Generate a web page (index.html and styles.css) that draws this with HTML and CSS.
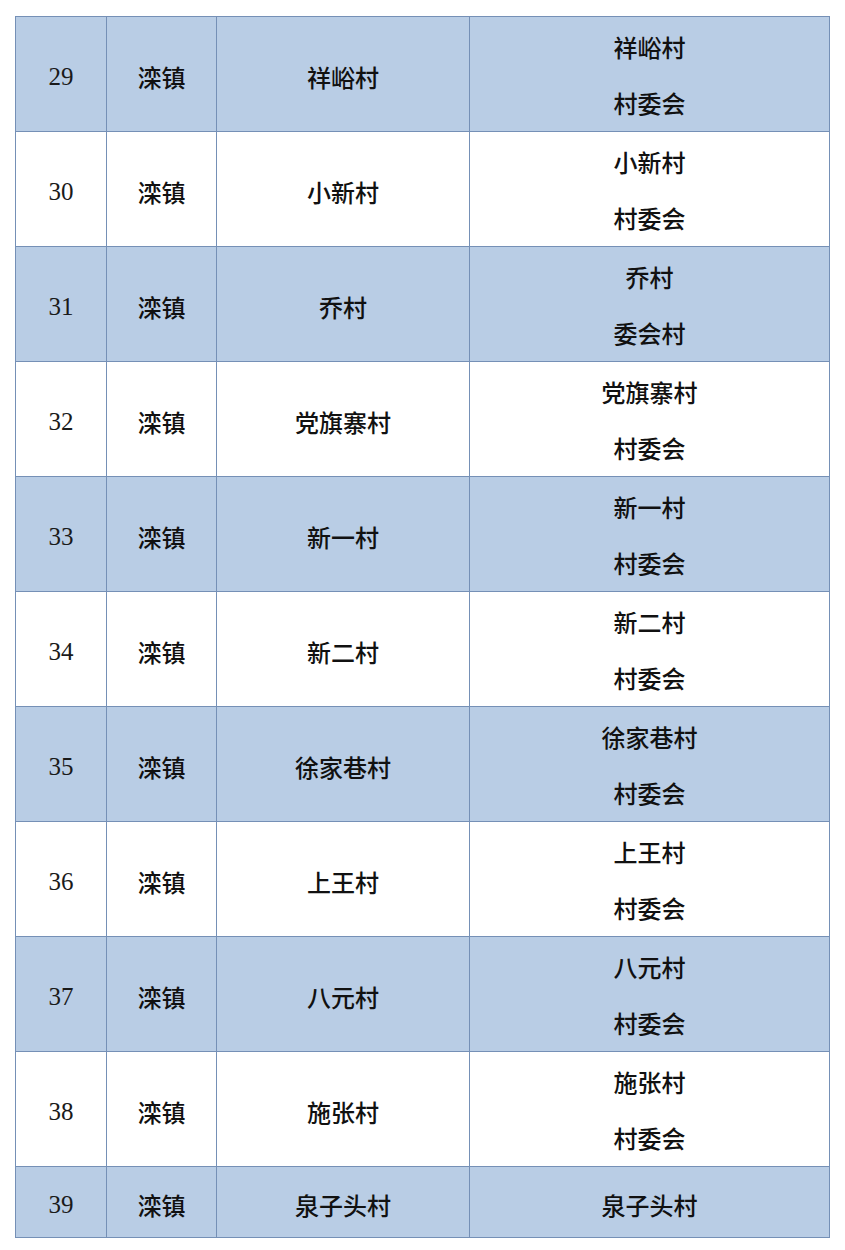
FILE: index.html
```html
<!DOCTYPE html>
<html lang="zh">
<head>
<meta charset="utf-8">
<link rel="stylesheet" href="styles.css">
</head>
<body>
<table class="tbl">
  <colgroup>
    <col class="c1"><col class="c2"><col class="c3"><col class="c4">
  </colgroup>
  <tr class="shade"><td class="num">29</td><td>滦镇</td><td>祥峪村</td><td class="two"><div class="ln">祥峪村</div><div class="ln">村委会</div></td></tr>
  <tr><td class="num">30</td><td>滦镇</td><td>小新村</td><td class="two"><div class="ln">小新村</div><div class="ln">村委会</div></td></tr>
  <tr class="shade"><td class="num">31</td><td>滦镇</td><td>乔村</td><td class="two"><div class="ln">乔村</div><div class="ln">委会村</div></td></tr>
  <tr><td class="num">32</td><td>滦镇</td><td>党旗寨村</td><td class="two"><div class="ln">党旗寨村</div><div class="ln">村委会</div></td></tr>
  <tr class="shade"><td class="num">33</td><td>滦镇</td><td>新一村</td><td class="two"><div class="ln">新一村</div><div class="ln">村委会</div></td></tr>
  <tr><td class="num">34</td><td>滦镇</td><td>新二村</td><td class="two"><div class="ln">新二村</div><div class="ln">村委会</div></td></tr>
  <tr class="shade"><td class="num">35</td><td>滦镇</td><td>徐家巷村</td><td class="two"><div class="ln">徐家巷村</div><div class="ln">村委会</div></td></tr>
  <tr><td class="num">36</td><td>滦镇</td><td>上王村</td><td class="two"><div class="ln">上王村</div><div class="ln">村委会</div></td></tr>
  <tr class="shade"><td class="num">37</td><td>滦镇</td><td>八元村</td><td class="two"><div class="ln">八元村</div><div class="ln">村委会</div></td></tr>
  <tr><td class="num">38</td><td>滦镇</td><td>施张村</td><td class="two"><div class="ln">施张村</div><div class="ln">村委会</div></td></tr>
  <tr class="shade last"><td class="num">39</td><td>滦镇</td><td>泉子头村</td><td>泉子头村</td></tr>
</table>
</body>
</html>
```
FILE: styles.css
```css
html, body {
  margin: 0;
  padding: 0;
  background: #ffffff;
}
body {
  padding: 16px 0 0 15px;
}
.tbl {
  border-collapse: collapse;
  table-layout: fixed;
  width: 814px;
  font-family: "Noto Sans CJK SC", "Noto Sans", sans-serif;
  font-weight: 500;
  font-size: 24px;
  color: #111111;
}
.c1 { width: 91px; }
.c2 { width: 110px; }
.c3 { width: 253px; }
.c4 { width: 360px; }
.tbl td {
  border: 1px solid #7590b6;
  height: 115px;
  padding: 5px 0 0 0;
  text-align: center;
  vertical-align: middle;
  box-sizing: border-box;
}
.tbl td.two {
  padding: 1px 0 0 0;
}
.tbl tr.last td {
  height: 71px;
}
.tbl td.num {
  font-family: "Liberation Serif", "DejaVu Serif", serif;
  font-weight: 400;
  font-size: 25px;
  color: #1a1a1a;
}
.shade td {
  background: #b9cde5;
}
.ln {
  line-height: 56px;
}
```
